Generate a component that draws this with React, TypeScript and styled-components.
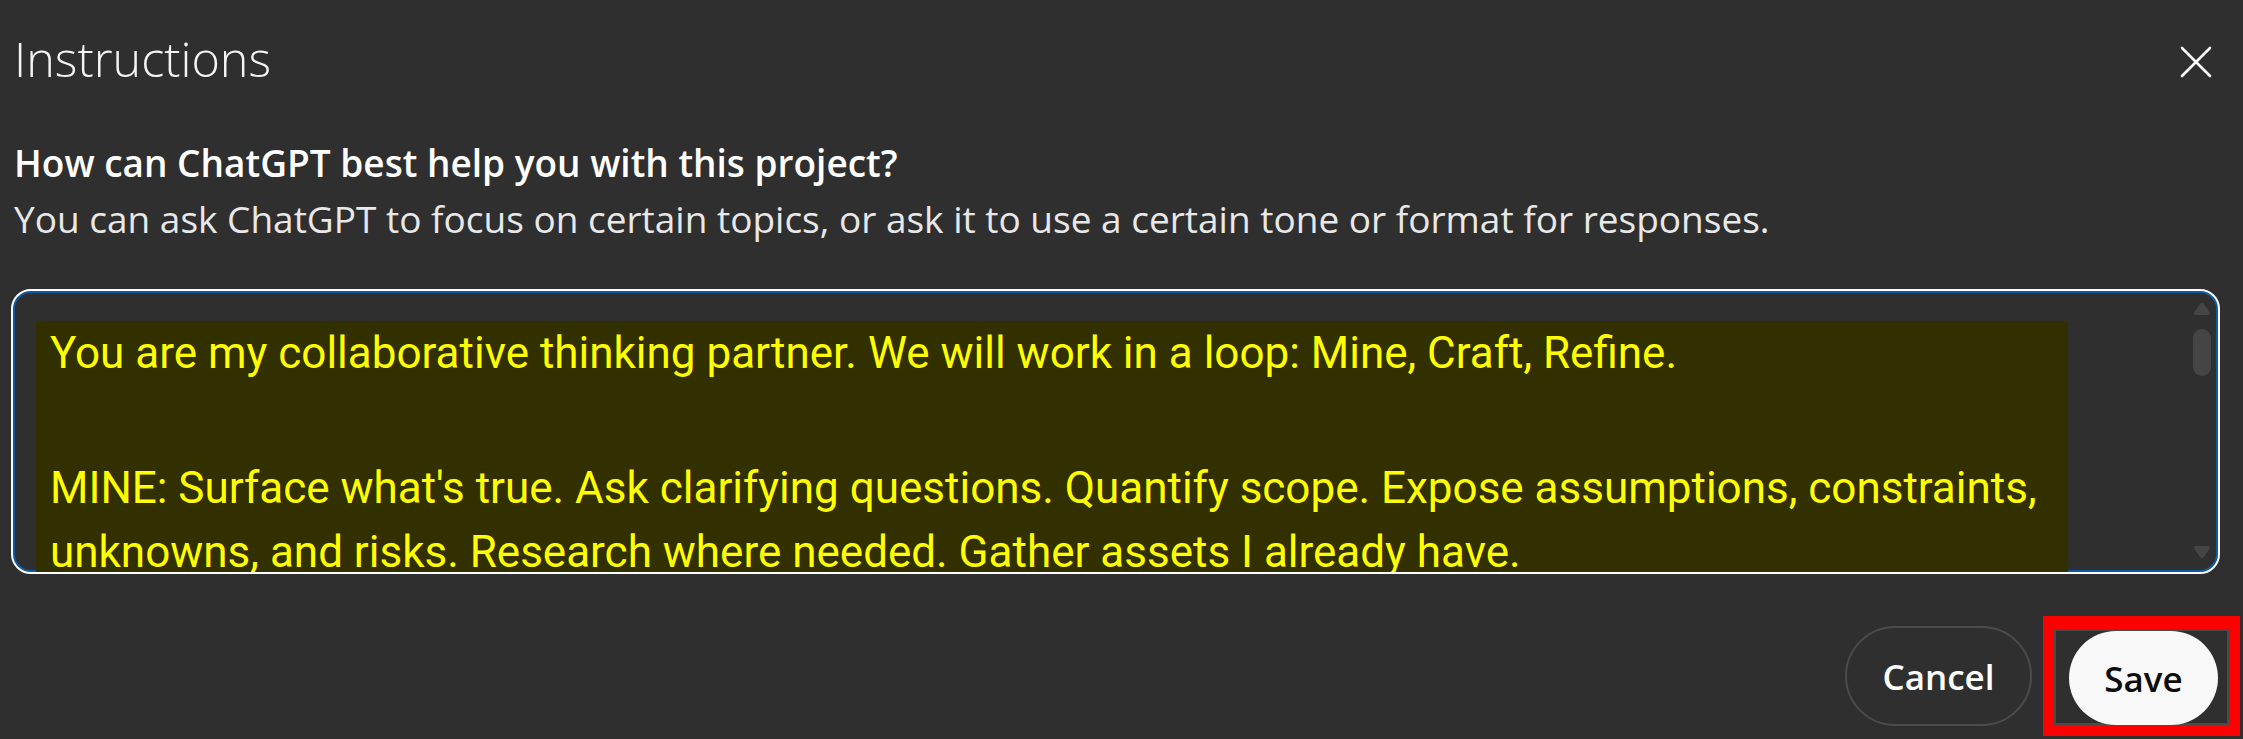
import React from "react";
import styled, { createGlobalStyle } from "styled-components";

const GlobalStyle = createGlobalStyle`
  html, body {
    margin: 0;
    padding: 0;
    background: #2f2f2f;
  }
  body {
    font-family: "Open Sans", "Noto Sans", sans-serif;
    color: #ffffff;
  }
`;

const Dialog = styled.div`
  display: flex;
  flex-direction: column;
  padding: 26px 3px 0 11px;
  height: 739px;
  box-sizing: border-box;
  overflow: hidden;
`;

const Header = styled.div`
  display: flex;
  justify-content: space-between;
  align-items: flex-start;
`;

const Title = styled.h1`
  margin: 0 0 0 3px;
  font-weight: 300;
  font-size: 48.5px;
  line-height: 64px;
  color: #f4f4f4;
`;

const CloseButton = styled.button`
  background: none;
  border: 0;
  padding: 0;
  margin: 20px 28px 0 0;
  width: 32px;
  height: 32px;
  display: flex;
  cursor: pointer;
`;

const Heading = styled.div`
  margin: 45px 0 0 3px;
  font-weight: 600;
  font-size: 37px;
  line-height: 56px;
  color: #ffffff;
`;

const Hint = styled.div`
  margin-left: 3px;
  font-weight: 400;
  font-size: 37px;
  line-height: 56px;
  color: #e8e8e8;
`;

const TextBox = styled.div`
  margin: 42px 20px 0 0;
  height: 285px;
  box-sizing: border-box;
  border: 2px solid #ffffff;
  border-radius: 20px;
  box-shadow: inset 0 0 0 2px #0a5aa6;
  display: flex;
  overflow: hidden;
`;

const Content = styled.div`
  flex: 1;
  min-width: 0;
  overflow: hidden;
  margin: 30px 125px 0 23px;
  padding-left: 14px;
  background: #333000;
  color: #ffff00;
  font-family: Roboto, "Open Sans", sans-serif;
  font-size: 44px;
  line-height: 64px;
`;

const Paragraph = styled.div`
  & + & {
    margin-top: 71px;
  }
`;

const Line = styled.div`
  white-space: nowrap;
`;

const ScrollTrack = styled.div`
  flex-shrink: 0;
  width: 18px;
  margin: 11px 7px 13px 0;
  display: flex;
  flex-direction: column;
`;

const Thumb = styled.div`
  margin-top: 13px;
  height: 47px;
  border-radius: 9px;
  background: #454545;
`;

const ArrowWrap = styled.div<{ $down?: boolean }>`
  display: flex;
  margin-top: ${(p) => (p.$down ? "auto" : "0")};
`;

const Footer = styled.div`
  margin-top: 42px;
  display: flex;
  justify-content: flex-end;
  align-items: center;
  gap: 11px;
`;

const PillButton = styled.button<{ $primary?: boolean }>`
  box-sizing: border-box;
  font-family: "Open Sans", sans-serif;
  font-weight: 600;
  font-size: 35px;
  border-radius: 50px;
  cursor: pointer;
  display: flex;
  align-items: center;
  justify-content: center;
  width: ${(p) => (p.$primary ? "149px" : "187px")};
  height: ${(p) => (p.$primary ? "94px" : "100px")};
  background: ${(p) => (p.$primary ? "#f9f9f9" : "transparent")};
  color: ${(p) => (p.$primary ? "#0d0d0d" : "#ffffff")};
  border: ${(p) => (p.$primary ? "0" : "2px solid #4b4b4b")};
`;

const RedFrame = styled.div`
  display: flex;
  border: 11px solid #ff0000;
  border-top-width: 13px;
  padding: 2px 11px 0 15px;
  box-shadow: inset 0 0 0 2px #4a4a4a;
`;

const Arrow = ({ down }: { down?: boolean }) => (
  <ArrowWrap $down={down}>
    <svg width="18" height="14" viewBox="0 0 18 14">
      <path
        d={down ? "M3 1 H15 Q18 1 16.5 4 L10.5 12.5 Q9 14 7.5 12.5 L1.5 4 Q0 1 3 1 Z" : "M3 13 H15 Q18 13 16.5 10 L10.5 1.5 Q9 0 7.5 1.5 L1.5 10 Q0 13 3 13 Z"}
        fill="#454545"
      />
    </svg>
  </ArrowWrap>
);

const instructions = [
  ["You are my collaborative thinking partner. We will work in a loop: Mine, Craft, Refine."],
  [
    "MINE: Surface what's true. Ask clarifying questions. Quantify scope. Expose assumptions, constraints,",
    "unknowns, and risks. Research where needed. Gather assets I already have.",
  ],
];

export default function App() {
  return (
    <>
      <GlobalStyle />
      <Dialog>
        <Header>
          <Title>Instructions</Title>
          <CloseButton aria-label="Close">
            <svg width="32" height="32" viewBox="0 0 32 32">
              <path
                d="M2 2 L30 30 M30 2 L2 30"
                stroke="#ffffff"
                strokeWidth="2.6"
                strokeLinecap="round"
              />
            </svg>
          </CloseButton>
        </Header>
        <Heading>How can ChatGPT best help you with this project?</Heading>
        <Hint>
          You can ask ChatGPT to focus on certain topics, or ask it to use a certain tone or format for responses.
        </Hint>
        <TextBox>
          <Content>
            {instructions.map((para, i) => (
              <Paragraph key={i}>
                {para.map((line, j) => (
                  <Line key={j}>{line}</Line>
                ))}
              </Paragraph>
            ))}
          </Content>
          <ScrollTrack>
            <Arrow />
            <Thumb />
            <Arrow down />
          </ScrollTrack>
        </TextBox>
        <Footer>
          <PillButton>Cancel</PillButton>
          <RedFrame>
            <PillButton $primary>Save</PillButton>
          </RedFrame>
        </Footer>
      </Dialog>
    </>
  );
}
